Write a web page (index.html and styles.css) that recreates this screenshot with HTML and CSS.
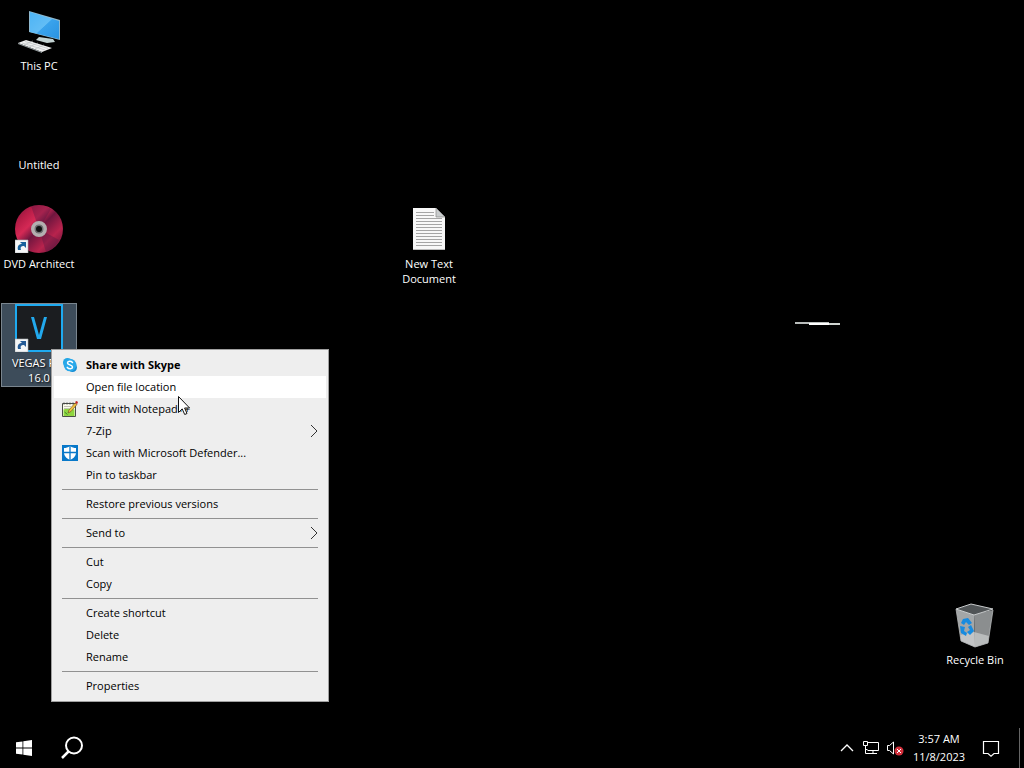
FILE: index.html
```html
<!DOCTYPE html>
<html lang="en">
<head>
<meta charset="utf-8">
<title>Desktop</title>
<link rel="stylesheet" href="styles.css">
</head>
<body>
<main class="desktop">
  <button class="item this-pc">
    <svg class="item-icon" viewBox="0 0 48 48" aria-hidden="true">
      <defs><linearGradient id="screen" x1="0" y1="0" x2="1" y2="1"><stop offset="0" stop-color="#4db4f5"/><stop offset=".5" stop-color="#62bdf5"/><stop offset=".52" stop-color="#3aa3ec"/><stop offset="1" stop-color="#2a93e2"/></linearGradient></defs>
      <path d="M14 4l31 9v20l-31-8z" fill="#8fb9cf"/>
      <path d="M15 5l29 9v18l-29-7z" fill="url(#screen)"/>
      <path d="M24 30l14 2 2 3-8 1-11-3z" fill="#c3d3d2"/>
      <path d="M3 36l8-3 26 8-10 4z" fill="#f0f1f1"/>
      <path d="M3 36l24 9v1L3 37z" fill="#9ba3a6"/>
      <path d="M7 36l23 7M10 34.500l23 7M9 38l9-4M14 40l9-4M20 42l9-4" stroke="#b5babc" stroke-width=".6"/>
    </svg>
    <span class="item-label">This PC</span>
  </button>
  <button class="item untitled">
    <span class="item-icon"></span>
    <span class="item-label">Untitled</span>
  </button>
  <button class="item dvd">
    <svg class="item-icon" viewBox="0 0 48 48" aria-hidden="true">
      <defs><linearGradient id="disc" x1="0" y1="0" x2="1" y2="1"><stop offset="0" stop-color="#68133a"/><stop offset=".2" stop-color="#b51c46"/><stop offset=".36" stop-color="#d52955"/><stop offset=".5" stop-color="#70163f"/><stop offset=".72" stop-color="#b8234d"/><stop offset="1" stop-color="#4c1235"/></linearGradient></defs>
      <circle cx="24" cy="24" r="24" fill="url(#disc)"/>
      <path d="M24 24L16 1q12-3 20 3zM24 24l7 23q9-3 13-12z" fill="#4c1743" opacity=".35"/>
      <circle cx="24" cy="24" r="6" fill="#29282b" stroke="#b3afb0" stroke-width="4"/>
      <circle cx="24" cy="24" r="4.500" fill="#717174"/><circle cx="24" cy="24" r="3" fill="#101112"/>
      <path d="M0 35h13v13H0z" fill="#f4f6f7" stroke="#aeb3b6" stroke-width=".6"/>
      <path d="M3 45c-1-4 1-6 4-6l-2-2h6v6l-2-2c-3 0-4 1-3 4z" fill="#17629d"/>
    </svg>
    <span class="item-label">DVD Architect</span>
  </button>
  <button class="item vegas selected">
    <svg class="item-icon" viewBox="0 0 48 48" aria-hidden="true">
      <path d="M1 1h46v46H1z" fill="#1b1d20" stroke="#1eaaf0" stroke-width="2"/>
      <path d="M16 13h3l5 18 5-18h3l-6 22h-4z" fill="#22a9ed"/>
      <path d="M0 35h13v13H0z" fill="#f4f6f7" stroke="#aeb3b6" stroke-width=".6"/>
      <path d="M3 45c-1-4 1-6 4-6l-2-2h6v6l-2-2c-3 0-4 1-3 4z" fill="#255b96"/>
    </svg>
    <span class="item-label">VEGAS Pro<br>16.0</span>
  </button>
  <button class="item text-doc">
    <svg class="item-icon" viewBox="0 0 48 48" aria-hidden="true">
      <path d="M8 3h23l9 9v33H8z" fill="#f8f8f8"/>
      <path d="M31 3v9h9z" fill="#c9cccd" stroke="#888" stroke-width=".7"/>
      <path d="M11 7.500h18M11 10.500h18M11 13.500h26M11 16.500h26M11 19.500h26M11 22.500h26M11 25.500h26M11 28.500h26M11 31.500h26M11 34.500h26M11 37.500h26M11 40.500h26" stroke="#a5a5a5"/>
      <path d="M8 44.500h32" stroke="#bbb"/>
    </svg>
    <span class="item-label">New Text<br>Document</span>
  </button>
  <button class="item recycle">
    <svg class="item-icon" viewBox="0 0 48 48" aria-hidden="true">
      <path d="M5 8l18 5 1 33-14-6z" fill="#a3a6a7"/>
      <path d="M23 13l19-4-5 33-13 4z" fill="#8b8e8f"/>
      <path d="M5 8l15-5 22 5-19 6z" fill="#505456" stroke="#c8cbcc"/>
      <path d="M9 34l14-3 15 4-1 7-13 4-14-6z" fill="#d8dada" opacity=".6"/>
      <path d="M5 8l5 32 14 6 13-4 5-33" fill="none" stroke="#b5b8b9" stroke-width=".8"/>
      <path d="M12 18l5-1 4 5-3 2-3-3-2 3-3-2zM9 25l5 1-1 4 3 2-1 3-5-3zM20 24l3 6-4 4-3-3 3-2-2-3z" fill="#168be0"/>
    </svg>
    <span class="item-label">Recycle Bin</span>
  </button>
  <svg class="dash" viewBox="0 0 46 6" aria-hidden="true"><path d="M0 1h34v2H0z" fill="#b9bdbb"/><path d="M14 2h31v2H14z" fill="#d0d5d1"/><path d="M14 2h20v2H14z" fill="#fff"/></svg>

  <div class="menu" role="menu">
    <button class="entry strong" role="menuitem">
      <svg class="entry-icon" viewBox="0 0 16 16" aria-hidden="true"><circle cx="5.500" cy="5.500" r="4.500" fill="#22a6e4"/><circle cx="10.500" cy="10.500" r="4.500" fill="#168ed4"/><circle cx="8" cy="8" r="6.300" fill="#28a8ea"/><path d="M10.500 5.500C9 3.800 5.500 4 5.500 6c0 2.300 5 1.500 5 4 0 2-3.500 2.300-5.200.4" fill="none" stroke="#fff" stroke-width="1.500" stroke-linecap="round"/></svg>
      <span>Share with Skype</span>
    </button>
    <button class="entry hovered" role="menuitem"><span>Open file location</span></button>
    <button class="entry" role="menuitem">
      <svg class="entry-icon" viewBox="0 0 16 16" aria-hidden="true"><path d="M.5 2.500h13v13H.5z" fill="#fbfbee" stroke="#4b4e47"/><path d="M1.500 8.500q5-2 11 0V15h-11z" fill="#8fd63f"/><path d="M2 5.500h7M2 7.500h5" stroke="#c4c4b4"/><path d="M2 1.500v2M5 1.500v2M8 1.500v2M11 1.500v2" stroke="#444"/><path d="M2.500 11l3 2.500" fill="none" stroke="#3b8a28"/><path d="M6 12l1-3 6-7 2 1.500-6 7z" fill="#efc040" stroke="#684a22" stroke-width=".6"/><path d="M13 1l1.500-1L16 1l-1 2.500z" fill="#c22424"/></svg>
      <span>Edit with Notepad++</span>
    </button>
    <button class="entry" role="menuitem" aria-haspopup="true"><span>7-Zip</span><svg class="chevron" viewBox="0 0 8 14" aria-hidden="true"><path d="M1 1l6 6-6 6"/></svg></button>
    <button class="entry" role="menuitem">
      <svg class="entry-icon" viewBox="0 0 16 16" aria-hidden="true"><path d="M0 0h16v16H0z" fill="#0878c9"/><path d="M8 1c2 1.500 4 2 6 2v4c0 4-2 6-6 8-4-2-6-4-6-8V3c2 0 4-.5 6-2z" fill="#fff"/><path d="M8 1v14M2 7.500h12" stroke="#0878c9" stroke-width="1.300"/></svg>
      <span>Scan with Microsoft Defender...</span>
    </button>
    <button class="entry" role="menuitem"><span>Pin to taskbar</span></button>
    <hr class="separator">
    <button class="entry" role="menuitem"><span>Restore previous versions</span></button>
    <hr class="separator">
    <button class="entry" role="menuitem" aria-haspopup="true"><span>Send to</span><svg class="chevron" viewBox="0 0 8 14" aria-hidden="true"><path d="M1 1l6 6-6 6"/></svg></button>
    <hr class="separator">
    <button class="entry" role="menuitem"><span>Cut</span></button>
    <button class="entry" role="menuitem"><span>Copy</span></button>
    <hr class="separator">
    <button class="entry" role="menuitem"><span>Create shortcut</span></button>
    <button class="entry" role="menuitem"><span>Delete</span></button>
    <button class="entry" role="menuitem"><span>Rename</span></button>
    <hr class="separator">
    <button class="entry" role="menuitem"><span>Properties</span></button>
  </div>
  <svg class="cursor" viewBox="0 0 12 19" aria-hidden="true"><path d="M.5.500v16l3.700-3.600 2.500 5.600 2.300-1-2.400-5.500h5z" fill="#fff" stroke="#111"/></svg>
</main>
<footer class="taskbar">
  <button class="task" aria-label="Start"><svg width="16" height="16" viewBox="0 0 16 16"><path d="M0 2.300l6.500-.9v6.200H0zM7.300 1.300L16 0v7.600H7.300zM0 8.400h6.500v6.200L0 13.700zM7.300 8.400H16V16l-8.700-1.300z" fill="#fff"/></svg></button>
  <button class="task" aria-label="Search"><svg width="24" height="24" viewBox="0 0 24 24"><circle cx="14" cy="9.500" r="8" fill="none" stroke="#fff" stroke-width="2"/><path d="M8.500 15.500L2 22" stroke="#fff" stroke-width="2.500"/></svg></button>
  <div class="tray">
    <button class="tray-button" aria-label="Show hidden icons"><svg width="14" height="8" viewBox="0 0 14 8"><path d="M1 7l6-6 6 6" fill="none" stroke="#fff" stroke-width="1.300"/></svg></button>
    <button class="tray-button" aria-label="Network"><svg width="18" height="16" viewBox="0 0 18 16"><path d="M5 2.500h11.500v8H5.500M11 10.500v3M7 13.500h8M1.500 1.500h4v4h-4zM3.500 5.500v8H7M3.500 9.500h2" fill="none" stroke="#fff"/></svg></button>
    <button class="tray-button" aria-label="Volume muted"><svg width="18" height="16" viewBox="0 0 18 16"><path d="M1.500 5.500h2l4-3.500v12l-4-3.500h-2z" fill="none" stroke="#fff"/><circle cx="13" cy="11" r="4.500" fill="#d3303c"/><path d="M11 9l4 4M15 9l-4 4" stroke="#fff"/></svg></button>
    <button class="clock"><time datetime="2023-11-08T03:57">3:57 AM<br>11/8/2023</time></button>
    <button class="notice" aria-label="Notifications"><svg width="18" height="17" viewBox="0 0 18 17"><path d="M1.500 1.500h15v12H12l-3 2.700-3-2.700H1.500z" fill="none" stroke="#fff" stroke-width="1.200"/></svg></button>
    <button class="show-desktop" aria-label="Show desktop"></button>
  </div>
</footer>
</body>
</html>
```
FILE: styles.css
```css
* { box-sizing: border-box; }

body {
  margin: 0;
  min-height: 100vh;
  display: flex;
  flex-direction: column;
  background: #000;
  color: #fff;
  font: 11px/15px "Open Sans", "Noto Sans", sans-serif;
  overflow: hidden;
}

button {
  margin: 0;
  padding: 0;
  border: 0;
  background: none;
  color: inherit;
  font: inherit;
}

svg { display: block; }

.desktop { position: relative; flex: 1; }

.item {
  position: absolute;
  width: 76px;
  min-height: 84px;
  display: flex;
  flex-direction: column;
  align-items: center;
  gap: 3px;
  border: 1px solid transparent;
}

.item-icon { width: 48px; height: 48px; flex: none; }
.item-label { white-space: nowrap; text-shadow: 1px 1px 2px #000; }

.this-pc { left: 1px; top: 6px; }
.untitled { left: 1px; top: 105px; }
.dvd { left: 1px; top: 204px; }
.vegas { left: 1px; top: 303px; }
.text-doc { left: 391px; top: 204px; }
.recycle { right: 11px; top: 600px; }
.selected { background: #3d4c5a; border-color: #7a858e; }
.dash { position: absolute; left: 795px; top: 321px; width: 46px; height: 6px; }

.menu {
  position: absolute;
  left: 51px;
  top: 349px;
  width: 278px;
  display: flex;
  flex-direction: column;
  padding: 4px 2px;
  border: 1px solid #a0a0a0;
  background: #eee;
  color: #000;
}

.entry {
  min-height: 22px;
  display: grid;
  grid-template-columns: 16px 1fr 8px;
  column-gap: 8px;
  align-items: center;
  padding: 0 8px 1px;
  text-align: left;
}

.entry span { grid-column: 2; white-space: nowrap; }
.entry-icon { grid-column: 1; width: 16px; height: 16px; }
.chevron { grid-column: 3; width: 8px; height: 14px; fill: none; stroke: #333; }
.strong { font-weight: 700; }
.hovered { background: #fff; }

.separator {
  align-self: stretch;
  height: 1px;
  margin: 3px 8px;
  border: 0;
  background: #919191;
}

.cursor { position: absolute; left: 178px; top: 396px; width: 12px; height: 19px; }

.taskbar { height: 40px; display: flex; align-items: stretch; }
.task { width: 48px; display: grid; place-items: center; }
.tray { display: flex; align-items: stretch; margin-left: auto; }
.tray-button { width: 24px; display: grid; place-items: center; }
.clock { width: 64px; line-height: 18px; text-align: center; }
.notice { width: 40px; display: grid; place-items: center; }
.show-desktop { width: 5px; margin-left: 8px; border-left: 1px solid #666; }
```
